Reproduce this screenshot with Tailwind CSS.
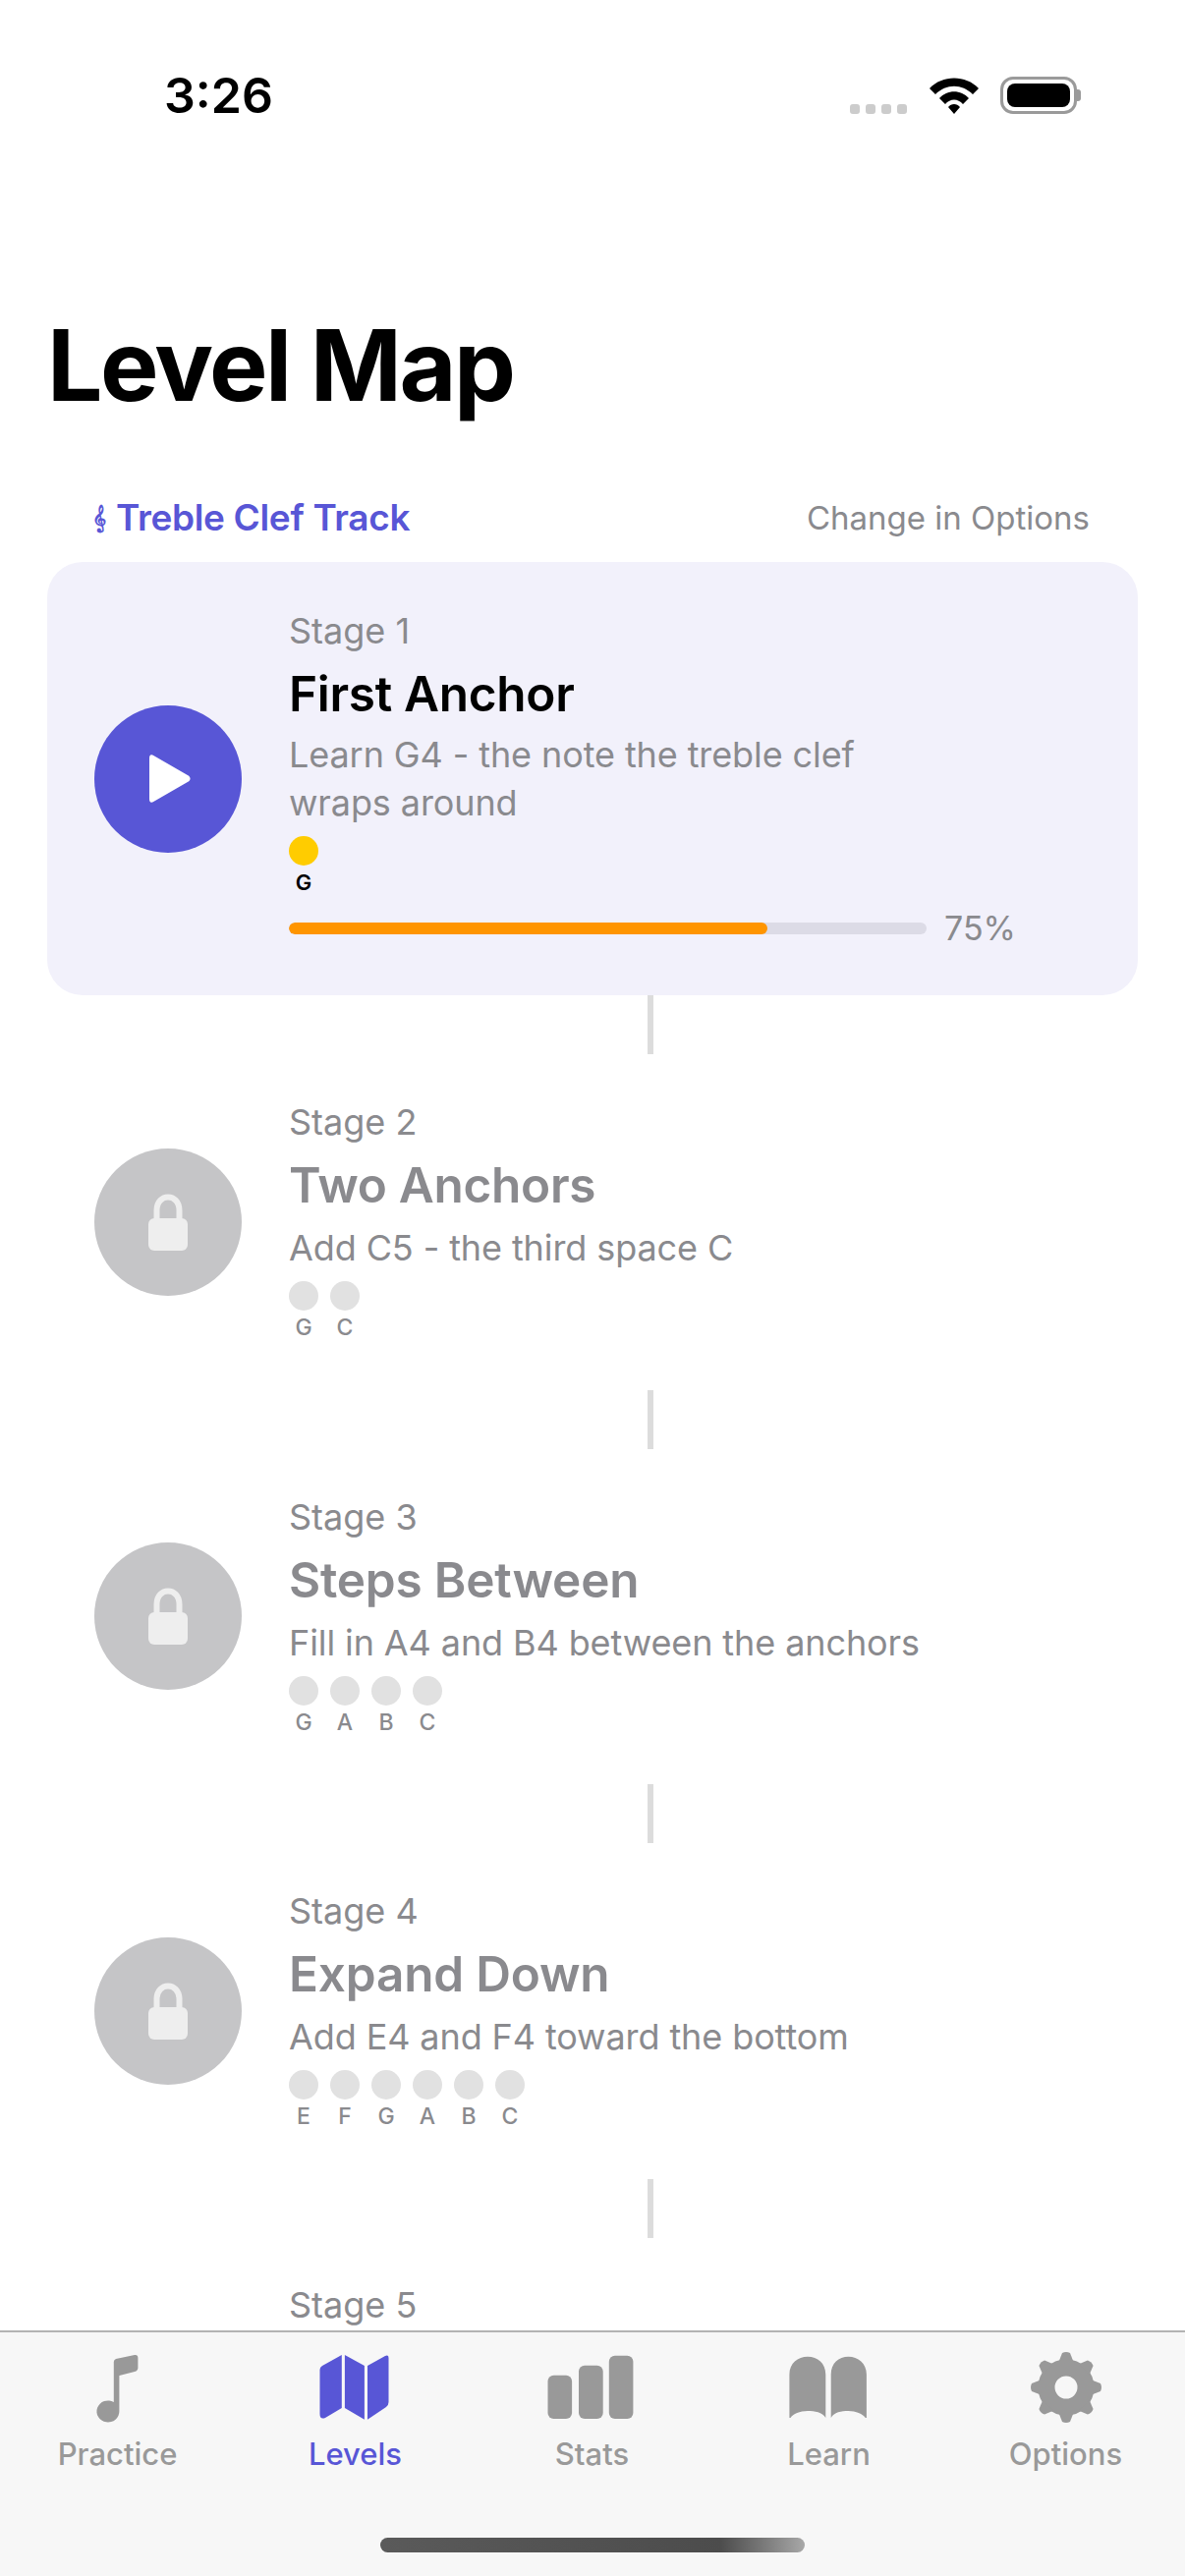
<!DOCTYPE html>
<html><head><meta charset="utf-8"><script src="https://cdn.jsdelivr.net/npm/@tailwindcss/browser@4"></script></head>
<body>
<div class="relative w-[1206px] h-[2622px] overflow-hidden bg-white font-['Inter',sans-serif]">
  <!-- status bar -->
  <div class="pt-[72px] pl-[167px] pr-[106px] flex justify-between items-start h-[299px]">
    <div class="text-[50px] leading-[50px] font-semibold text-black">3:26</div>
    <div class="flex items-start pt-[6px]">
      <div class="flex gap-[6px] mt-[28px] mr-[22px]"><span class="w-[10px] h-[10px] rounded-[3px] bg-[#cccccc]"></span><span class="w-[10px] h-[10px] rounded-[3px] bg-[#cccccc]"></span><span class="w-[10px] h-[10px] rounded-[3px] bg-[#cccccc]"></span><span class="w-[10px] h-[10px] rounded-[3px] bg-[#cccccc]"></span></div>
      <svg class="w-[52px] h-[38px] mr-[21px]" viewBox="0 0 52 38"><path d="M1 12 C14 -2 38 -2 51 12 L45 18 C34 7 18 7 7 18 Z M11 22 C19 13 33 13 41 22 L35 28 C30 22 22 22 17 28 Z M20 31 C23 27 29 27 32 31 L26 38 Z" fill="#000"/></svg>
      <div class="flex items-center"><div class="w-[78px] h-[38px] rounded-[13px] border-[3px] border-[#9a9a9a] p-[4px]"><div class="w-full h-full rounded-[8px] bg-black"></div></div><div class="w-[4px] h-[12px] rounded-r-[3px] bg-[#9a9a9a]"></div></div>
    </div>
  </div>
  <h1 class="px-[48px] h-[203px] text-[100px] leading-[146px] font-bold text-black tracking-[-2.5px]">Level Map</h1>
  <!-- track -->
  <div class="flex justify-between items-center h-[52px] pl-[94px] pr-[97px] mb-[-2px] mt-[-1px]">
    <div class="flex items-center text-[37px] leading-[52px] font-semibold tracking-[-0.35px] text-[#5856d6]"><span class="font-['DejaVu_Sans',sans-serif] text-[24px] w-[24px]">𝄞</span><span>Treble Clef Track</span></div>
    <div class="text-[33px] leading-[50px] text-[#8a8a8e]">Change in Options</div>
  </div>
  <div class="mt-[21px]">
    <!-- card 1 -->
    <div class="mx-[48px] rounded-[36px] bg-[#f2f1fb] flex items-center gap-[48px] pl-[48px] pr-[48px] pt-[48px] pb-[46px]">
      <div class="w-[150px] h-[150px] rounded-full bg-[#5856d6] flex items-center justify-center shrink-0 mb-[2px]">
        <svg class="w-[43px] h-[49px] ml-[5px]" viewBox="0 0 46 52"><path d="M0 4 Q0 -2 5 1 L43 23 Q46 26 43 29 L5 51 Q0 54 0 48 Z" fill="#fff"/></svg>
      </div>
      <div class="flex-1 min-w-0">
        <div class="text-[36px] leading-[44px] text-[#8a8a8e]">Stage 1</div>
        <div class="text-[49.5px] leading-[60px] font-semibold tracking-[-0.3px] text-black mt-[12px]">First Anchor</div>
        <div class="text-[36px] leading-[49px] tracking-[-0.1px] text-[#8a8a8e] mt-[8px] w-[650px]">Learn G4 - the note the treble clef wraps around</div>
        <div class="flex gap-[12px] mt-[9px]">
          <div class="w-[30px] flex flex-col items-center"><span class="w-[30px] h-[30px] rounded-full bg-[#ffcc00]"></span><span class="text-[22px] leading-[28px] font-semibold text-black mt-[3px]">G</span></div>
        </div>
        <div class="flex items-center h-[44px] mt-[11px]">
          <div class="w-[649px] h-[12px] rounded-full bg-[#dcdbe6] overflow-hidden"><div class="h-full w-[75%] rounded-full bg-[#ff9500]"></div></div>
          <span class="text-[34px] leading-[44px] text-[#8a8a8e] ml-[18px]">75%</span>
        </div>
      </div>
    </div>
    <div class="w-[6px] h-[60px] ml-[659px] bg-[#dcdcdc]"></div>

    <!-- stage 2 -->
    <div class="mx-[48px] flex items-center gap-[48px] px-[48px] h-[341.5px]">
      <div class="w-[150px] h-[150px] rounded-full bg-[#c5c5c7] flex items-center justify-center shrink-0">
        <svg class="w-[40px] h-[58px]" viewBox="0 0 40 58"><path d="M8.5 28 V17 C8.5 -1 31.5 -1 31.5 17 V28" fill="none" stroke="#eeeeee" stroke-width="6"/><rect y="25" width="40" height="33" rx="6" fill="#eeeeee"/></svg>
      </div>
      <div class="flex-1 min-w-0">
        <div class="text-[36px] leading-[44px] text-[#8a8a8e] -mt-[2px]">Stage 2</div>
        <div class="text-[49.5px] leading-[60px] font-semibold tracking-[-0.3px] text-[#8a8a8e] mt-[12px]">Two Anchors</div>
        <div class="text-[36px] leading-[49px] tracking-[-0.1px] text-[#8a8a8e] mt-[10px]">Add C5 - the third space C</div>
        <div class="flex gap-[12px] mt-[9px]">
          <div class="w-[30px] flex flex-col items-center"><span class="w-[30px] h-[30px] rounded-full bg-[#e1e1e1]"></span><span class="text-[23px] leading-[28px] font-medium text-[#8a8a8e] mt-[3px]">G</span></div>
          <div class="w-[30px] flex flex-col items-center"><span class="w-[30px] h-[30px] rounded-full bg-[#e1e1e1]"></span><span class="text-[23px] leading-[28px] font-medium text-[#8a8a8e] mt-[3px]">C</span></div>
        </div>
      </div>
    </div>
    <div class="w-[6px] h-[60px] ml-[659px] bg-[#dcdcdc]"></div>

    <!-- stage 3 -->
    <div class="mx-[48px] flex items-center gap-[48px] px-[48px] h-[341.5px]">
      <div class="w-[150px] h-[150px] rounded-full bg-[#c5c5c7] flex items-center justify-center shrink-0">
        <svg class="w-[40px] h-[58px]" viewBox="0 0 40 58"><path d="M8.5 28 V17 C8.5 -1 31.5 -1 31.5 17 V28" fill="none" stroke="#eeeeee" stroke-width="6"/><rect y="25" width="40" height="33" rx="6" fill="#eeeeee"/></svg>
      </div>
      <div class="flex-1 min-w-0">
        <div class="text-[36px] leading-[44px] text-[#8a8a8e] -mt-[2px]">Stage 3</div>
        <div class="text-[49.5px] leading-[60px] font-semibold tracking-[-0.2px] text-[#8a8a8e] mt-[12px]">Steps Between</div>
        <div class="text-[36px] leading-[49px] tracking-[-0.1px] text-[#8a8a8e] mt-[10px]">Fill in A4 and B4 between the anchors</div>
        <div class="flex gap-[12px] mt-[9px]">
          <div class="w-[30px] flex flex-col items-center"><span class="w-[30px] h-[30px] rounded-full bg-[#e1e1e1]"></span><span class="text-[23px] leading-[28px] font-medium text-[#8a8a8e] mt-[3px]">G</span></div>
          <div class="w-[30px] flex flex-col items-center"><span class="w-[30px] h-[30px] rounded-full bg-[#e1e1e1]"></span><span class="text-[23px] leading-[28px] font-medium text-[#8a8a8e] mt-[3px]">A</span></div>
          <div class="w-[30px] flex flex-col items-center"><span class="w-[30px] h-[30px] rounded-full bg-[#e1e1e1]"></span><span class="text-[23px] leading-[28px] font-medium text-[#8a8a8e] mt-[3px]">B</span></div>
          <div class="w-[30px] flex flex-col items-center"><span class="w-[30px] h-[30px] rounded-full bg-[#e1e1e1]"></span><span class="text-[23px] leading-[28px] font-medium text-[#8a8a8e] mt-[3px]">C</span></div>
        </div>
      </div>
    </div>
    <div class="w-[6px] h-[60px] ml-[659px] bg-[#dcdcdc]"></div>

    <!-- stage 4 -->
    <div class="mx-[48px] flex items-center gap-[48px] px-[48px] h-[341.5px]">
      <div class="w-[150px] h-[150px] rounded-full bg-[#c5c5c7] flex items-center justify-center shrink-0">
        <svg class="w-[40px] h-[58px]" viewBox="0 0 40 58"><path d="M8.5 28 V17 C8.5 -1 31.5 -1 31.5 17 V28" fill="none" stroke="#eeeeee" stroke-width="6"/><rect y="25" width="40" height="33" rx="6" fill="#eeeeee"/></svg>
      </div>
      <div class="flex-1 min-w-0">
        <div class="text-[36px] leading-[44px] text-[#8a8a8e] -mt-[2px]">Stage 4</div>
        <div class="text-[49.5px] leading-[60px] font-semibold tracking-[-0.2px] text-[#8a8a8e] mt-[12px]">Expand Down</div>
        <div class="text-[36px] leading-[49px] tracking-[-0.1px] text-[#8a8a8e] mt-[10px]">Add E4 and F4 toward the bottom</div>
        <div class="flex gap-[12px] mt-[9px]">
          <div class="w-[30px] flex flex-col items-center"><span class="w-[30px] h-[30px] rounded-full bg-[#e1e1e1]"></span><span class="text-[23px] leading-[28px] font-medium text-[#8a8a8e] mt-[3px]">E</span></div>
          <div class="w-[30px] flex flex-col items-center"><span class="w-[30px] h-[30px] rounded-full bg-[#e1e1e1]"></span><span class="text-[23px] leading-[28px] font-medium text-[#8a8a8e] mt-[3px]">F</span></div>
          <div class="w-[30px] flex flex-col items-center"><span class="w-[30px] h-[30px] rounded-full bg-[#e1e1e1]"></span><span class="text-[23px] leading-[28px] font-medium text-[#8a8a8e] mt-[3px]">G</span></div>
          <div class="w-[30px] flex flex-col items-center"><span class="w-[30px] h-[30px] rounded-full bg-[#e1e1e1]"></span><span class="text-[23px] leading-[28px] font-medium text-[#8a8a8e] mt-[3px]">A</span></div>
          <div class="w-[30px] flex flex-col items-center"><span class="w-[30px] h-[30px] rounded-full bg-[#e1e1e1]"></span><span class="text-[23px] leading-[28px] font-medium text-[#8a8a8e] mt-[3px]">B</span></div>
          <div class="w-[30px] flex flex-col items-center"><span class="w-[30px] h-[30px] rounded-full bg-[#e1e1e1]"></span><span class="text-[23px] leading-[28px] font-medium text-[#8a8a8e] mt-[3px]">C</span></div>
        </div>
      </div>
    </div>
    <div class="w-[6px] h-[60px] ml-[659px] bg-[#dcdcdc]"></div>

    <!-- stage 5 -->
    <div class="mx-[48px] flex items-start gap-[48px] px-[48px] pt-[46px]">
      <div class="w-[150px] h-[150px] rounded-full bg-[#c5c5c7] mt-[50px] shrink-0"></div>
      <div class="text-[36px] leading-[44px] text-[#8a8a8e]">Stage 5</div>
    </div>
  </div>

  <!-- tab bar -->
  <div class="absolute left-0 right-0 bottom-0 h-[250px] bg-[#f7f7f7] border-t-2 border-[#b3b3b3]">
    <div class="grid grid-cols-5 w-[1205px] pt-[19px]">
      <div class="flex flex-col items-center text-[#999999]">
        <svg class="w-[100px] h-[76px]" viewBox="0 0 100 76"><path d="M44.8 11 Q44.8 9 47 8 L66 4 Q69.4 3.5 69.4 7 V17 Q69.4 20 66 21 L50.4 25 V61 A11.5 11 0 1 1 44.8 52 Z" fill="#999999"/></svg>
        <span class="text-[31px] leading-[40px] font-medium mt-[9px] -ml-[2px]">Practice</span>
      </div>
      <div class="flex flex-col items-center text-[#5856d6]">
        <svg class="w-[100px] h-[76px]" viewBox="0 0 100 76"><path d="M35.8 4 V58 L19 68 Q13.5 70 13.5 64 V19 Q13.5 16.3 16 15 Z M38.9 4 L58.9 15 V69.7 L38.9 58 Z M62 15 L80 5 Q83.5 3.5 83.5 7 V52 Q83.5 55 81 57 L62 69.7 Z" fill="#5856d6"/></svg>
        <span class="text-[31px] leading-[40px] font-medium mt-[9px]">Levels</span>
      </div>
      <div class="flex flex-col items-center text-[#999999]">
        <svg class="w-[100px] h-[76px]" viewBox="0 0 100 76"><rect x="4.5" y="24.7" width="24.6" height="44.3" rx="6" fill="#999999"/><rect x="36" y="14.7" width="24.7" height="54.3" rx="6" fill="#999999"/><rect x="66.8" y="4.7" width="24.6" height="64.3" rx="6" fill="#999999"/></svg>
        <span class="text-[31px] leading-[40px] font-medium mt-[9px]">Stats</span>
      </div>
      <div class="flex flex-col items-center text-[#999999]">
        <svg class="w-[100px] h-[76px]" viewBox="0 0 100 76"><path d="M9.4 68 V24 C9.4 12 18 5.7 28 5.7 C38 5.7 46.3 12 46.3 24 V68 C43 62 35 61 28 61 C20 61 13 64 10.5 68 Z M87.9 68 V24 C87.9 12 79 5.7 69.5 5.7 C59.5 5.7 51.7 12 51.7 24 V68 C55 62 62 61 69.5 61 C77 61 84 64 86.8 68 Z" fill="#999999"/></svg>
        <span class="text-[31px] leading-[40px] font-medium mt-[9px]">Learn</span>
      </div>
      <div class="flex flex-col items-center text-[#999999]">
        <svg class="w-[100px] h-[76px]" viewBox="0 0 100 76"><circle cx="50" cy="37" r="20" fill="none" stroke="#999999" stroke-width="17"/><g fill="#999999"><path d="M42.5 11 L46 2 Q50 0 54 2 L57.5 11 Z"/><path d="M42.5 11 L46 2 Q50 0 54 2 L57.5 11 Z" transform="rotate(45 50 37)"/><path d="M42.5 11 L46 2 Q50 0 54 2 L57.5 11 Z" transform="rotate(90 50 37)"/><path d="M42.5 11 L46 2 Q50 0 54 2 L57.5 11 Z" transform="rotate(135 50 37)"/><path d="M42.5 11 L46 2 Q50 0 54 2 L57.5 11 Z" transform="rotate(180 50 37)"/><path d="M42.5 11 L46 2 Q50 0 54 2 L57.5 11 Z" transform="rotate(225 50 37)"/><path d="M42.5 11 L46 2 Q50 0 54 2 L57.5 11 Z" transform="rotate(270 50 37)"/><path d="M42.5 11 L46 2 Q50 0 54 2 L57.5 11 Z" transform="rotate(315 50 37)"/></g></svg>
        <span class="text-[31px] leading-[40px] font-medium mt-[9px]">Options</span>
      </div>
    </div>
    <div class="absolute left-[387px] top-[209px] w-[432px] h-[15px] rounded-full bg-gradient-to-r from-[#5a5a5a] via-[#4c4c4c] via-80% to-[#a8a8a8]"></div>
  </div>
</div>
</body></html>
